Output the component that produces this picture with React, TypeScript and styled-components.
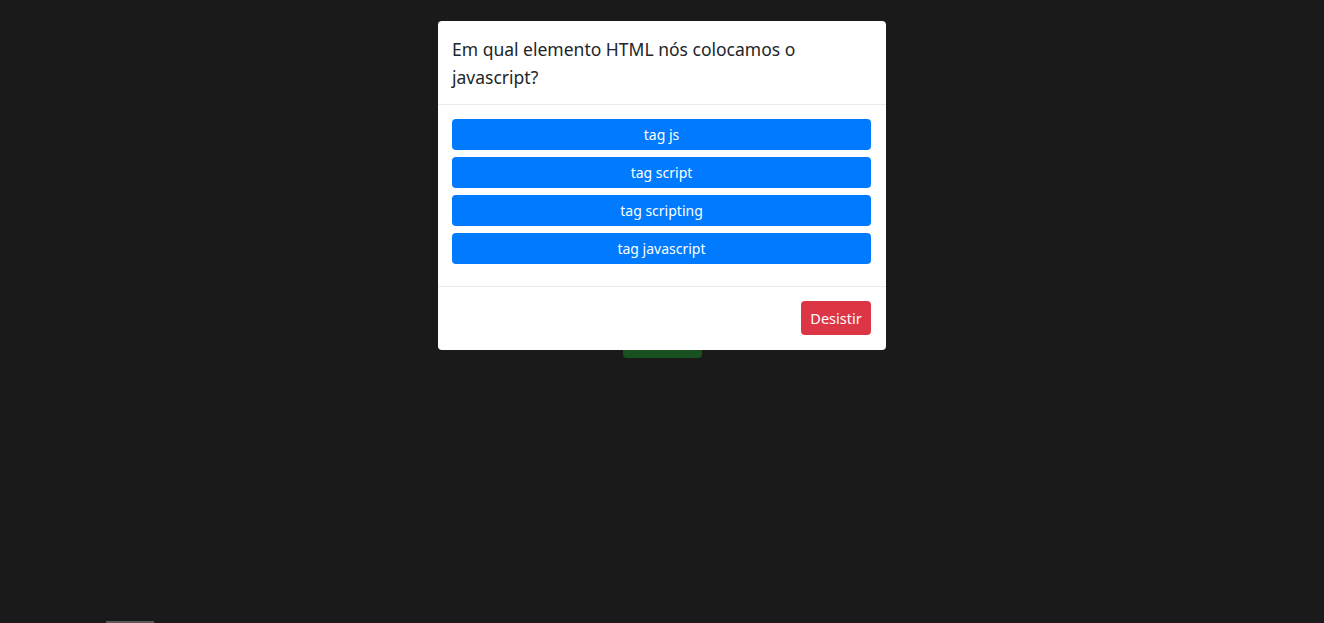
import styled, { createGlobalStyle } from "styled-components";

const GlobalStyle = createGlobalStyle`
  html, body {
    margin: 0;
    padding: 0;
    background-color: #1a1a1a;
    font-family: "Noto Sans", "Open Sans", Arial, sans-serif;
  }
`;

const Page = styled.div`
  min-height: 623px;
  display: flex;
  flex-direction: column;
  align-items: center;
  padding-top: 324px;
  box-sizing: border-box;
`;

const StartButton = styled.div`
  width: 79px;
  height: 34px;
  border-radius: 4px;
  background-color: #19501f;
`;

const ScrollThumb = styled.div`
  position: fixed;
  left: 106px;
  bottom: 0;
  width: 48px;
  height: 2px;
  background-color: #5a5a5a;
`;

const Overlay = styled.div`
  position: fixed;
  inset: 0;
  display: flex;
  justify-content: center;
  align-items: flex-start;
  padding-top: 21px;
`;

const Modal = styled.div`
  width: 448px;
  background-color: #fff;
  border-radius: 4px;
  display: flex;
  flex-direction: column;
`;

const Header = styled.div`
  padding: 14px 14px 13px;
  border-bottom: 1px solid #e9ecef;
`;

const Title = styled.h5`
  margin: 0;
  font-size: 17.5px;
  font-weight: 400;
  line-height: 28px;
  color: #212529;
`;

const Body = styled.div`
  padding: 14px 15px 15px 14px;
  display: flex;
  flex-direction: column;
  gap: 7px;
  border-bottom: 1px solid #e9ecef;
`;

const Answer = styled.button`
  height: 31px;
  border: none;
  border-radius: 4px;
  background-color: #007bff;
  color: #fff;
  font-family: inherit;
  font-size: 14px;
  cursor: pointer;
  &:last-child {
    margin-bottom: 7px;
  }
`;

const Footer = styled.div`
  padding: 14px 15px 15px;
  display: flex;
  justify-content: flex-end;
`;

const QuitButton = styled.button`
  height: 34px;
  width: 70px;
  padding: 0;
  border: none;
  border-radius: 4px;
  background-color: #dc3545;
  color: #fff;
  font-family: inherit;
  font-size: 14.5px;
  cursor: pointer;
`;

const answers = ["tag js", "tag script", "tag scripting", "tag javascript"];

export default function App() {
  return (
    <>
      <GlobalStyle />
      <Page>
        <StartButton />
      </Page>
      <ScrollThumb />
      <Overlay>
        <Modal>
          <Header>
            <Title>Em qual elemento HTML nós colocamos o javascript?</Title>
          </Header>
          <Body>
            {answers.map((a) => (
              <Answer key={a}>{a}</Answer>
            ))}
          </Body>
          <Footer>
            <QuitButton>Desistir</QuitButton>
          </Footer>
        </Modal>
      </Overlay>
    </>
  );
}
